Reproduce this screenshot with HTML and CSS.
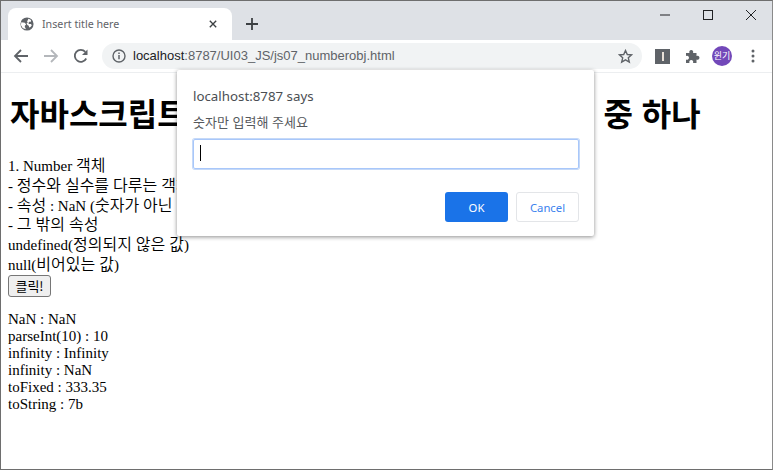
FILE: index.html
```html
<!DOCTYPE html>
<html lang="ko">
<head>
<meta charset="utf-8">
<title>Insert title here</title>
<link rel="stylesheet" href="styles.css">
</head>
<body>
<div class="window">
  <div class="tabstrip">
    <div class="tab">
      <svg class="favicon" width="16" height="16" viewBox="0 0 16 16"><circle cx="8" cy="8" r="7.500" fill="#5f6368"/><path d="M1.500 6l4 .5 1.500 2-1.500 1.500v1.500l1 1.500v1L3 12.500 1 9zM9.500 2l1.500.5 1.500 1v2h-2l-1 1.500 1 1h2l1 1.500-1.500 2-1.500.5-.5-2-1.500-1-1-1.500 1.500-1.500-1-1 1-1.500z" fill="#fff"/></svg>
      <span class="tab-title">Insert title here</span>
      <svg class="tab-close" width="10" height="10" viewBox="0 0 10 10"><path d="M1 1l8 8M9 1l-8 8" stroke="#3c4043" stroke-width="1.700" fill="none"/></svg>
    </div>
    <svg class="newtab" width="12" height="12" viewBox="0 0 12 12"><path d="M6 0v12M0 6h12" stroke="#3c4043" stroke-width="1.800" fill="none"/></svg>
    <div class="winctl">
      <svg width="10" height="10" viewBox="0 0 10 10"><path d="M0 5h10" stroke="#202124" stroke-width="1" fill="none"/></svg>
      <svg width="10" height="10" viewBox="0 0 10 10"><rect x=".5" y=".5" width="9" height="9" stroke="#202124" fill="none"/></svg>
      <svg width="10" height="10" viewBox="0 0 10 10"><path d="M0 0l10 10M10 0L0 10" stroke="#202124" fill="none"/></svg>
    </div>
  </div>
  <div class="toolbar">
    <svg class="nav" width="16" height="16" viewBox="0 0 16 16"><path d="M15 8H2M8 2L2 8l6 6" stroke="#5f6368" stroke-width="1.800" fill="none"/></svg>
    <svg class="nav" width="16" height="16" viewBox="0 0 16 16"><path d="M1 8h13M8 2l6 6-6 6" stroke="#b4b7bb" stroke-width="1.800" fill="none"/></svg>
    <svg class="nav" width="16" height="16" viewBox="0 0 16 16"><path d="M13.200 10.500A6 6 0 1 1 12.300 3.800" stroke="#5f6368" stroke-width="1.800" fill="none"/><path d="M14.500 1.500v5.500H9z" fill="#5f6368"/></svg>
    <div class="omnibox">
      <svg width="14" height="14" viewBox="0 0 14 14"><circle cx="7" cy="7" r="6" stroke="#5f6368" stroke-width="1.400" fill="none"/><path d="M7 6v4.200M7 3.500v1.500" stroke="#5f6368" stroke-width="1.500"/></svg>
      <span class="url"><span class="host">localhost</span>:8787/UI03_JS/js07_numberobj.html</span>
      <svg class="star" width="15" height="15" viewBox="0 0 15 15"><path d="M7.500 1.500l1.800 4 4.300.4-3.300 2.900 1 4.300-3.800-2.300-3.800 2.300 1-4.300L1.400 5.900l4.300-.4z" stroke="#5f6368" stroke-width="1.400" fill="none"/></svg>
    </div>
    <div class="ext-box"><span class="ext-bar"></span></div>
    <svg class="puzzle" width="14" height="14" viewBox="0 0 14 14"><path d="M0 4h3.500a2 2 0 1 1 3.500 0H10.500v3a2 2 0 1 1 0 3.500V14H7a2 2 0 1 0-3.500 0H0v-3.500a2 2 0 1 0 0-3.500z" fill="#5f6368"/></svg>
    <div class="avatar">윈기</div>
    <svg class="menu" width="4" height="14" viewBox="0 0 4 14"><circle cx="2" cy="2" r="1.500" fill="#5f6368"/><circle cx="2" cy="7" r="1.500" fill="#5f6368"/><circle cx="2" cy="12" r="1.500" fill="#5f6368"/></svg>
  </div>
  <main class="page">
    <h1 class="title">자바스크립트 기본 내장 객체 Number, 객체 중 하나</h1>
    <div class="kr-lines">
      <div class="l">1. Number <span class="ko">객체</span></div>
      <div class="l">- <span class="ko">정수와 실수를 다루는 객체</span></div>
      <div class="l">- <span class="ko">속성</span> : NaN (<span class="ko">숫자가 아닌 값</span>)</div>
      <div class="l">- <span class="ko">그 밖의 속성</span></div>
      <div class="l">undefined(<span class="ko">정의되지 않은 값</span>)</div>
      <div class="l">null(<span class="ko">비어있는 값</span>)</div>
    </div>
    <button class="btn">클릭!</button>
    <div class="results">
      <div>NaN : NaN</div>
      <div>parseInt(10) : 10</div>
      <div>infinity : Infinity</div>
      <div>infinity : NaN</div>
      <div>toFixed : 333.35</div>
      <div>toString : 7b</div>
    </div>
  </main>
  <div class="dialog">
    <div class="dlg-title">localhost:8787 says</div>
    <div class="dlg-msg">숫자만 입력해 주세요</div>
    <div class="dlg-input"><span class="caret"></span></div>
    <div class="dlg-btns">
      <button class="ok">OK</button>
      <button class="cancel">Cancel</button>
    </div>
  </div>
</div>
</body>
</html>
```
FILE: styles.css
```css
* { box-sizing: border-box; }
html, body { margin: 0; padding: 0; }
body { width: 773px; height: 470px; overflow: hidden; background: #fff; }
.window {
  position: relative;
  width: 773px;
  height: 470px;
  border: 1px solid #6e6e6e;
  border-right-color: #8a8a8a;
  overflow: hidden;
  display: flex;
  flex-direction: column;
  font-family: "Liberation Serif", "Noto Sans CJK KR", serif;
}
.tabstrip {
  height: 39px;
  flex: none;
  background: #dee1e6;
  display: flex;
  align-items: flex-end;
  padding-left: 7px;
}
.tab {
  width: 224px;
  height: 32px;
  background: #fff;
  border-radius: 8px 8px 0 0;
  display: flex;
  align-items: center;
  padding: 0 15px 0 12px;
}
.favicon { flex: none; width: 14px; height: 14px; }
.tab-title {
  flex: 1;
  margin-left: 8px;
  font: 10.700px "Noto Sans", "Open Sans", sans-serif;
  color: #5f6368;
}
.tab-close { flex: none; width: 8px; height: 8px; }
.newtab { flex: none; margin: 0 0 10px 14px; width: 12px; height: 12px; }
.winctl {
  margin-left: auto;
  align-self: flex-start;
  display: flex;
  gap: 33px;
  padding: 9px 16px 0 0;
}
.toolbar {
  height: 33px;
  flex: none;
  background: #fff;
  border-bottom: 1px solid #eceef0;
  display: flex;
  align-items: center;
  padding-left: 12px;
}
.nav { flex: none; margin-right: 14px; }
.omnibox {
  flex: none;
  width: 540px;
  height: 26px;
  margin-left: -1px;
  background: #f1f3f4;
  border-radius: 13px;
  display: flex;
  align-items: center;
  padding: 0 9px 0 10px;
}
.url {
  flex: 1;
  margin-left: 7px;
  font: 13px/26px "Liberation Sans", Arial, sans-serif;
  color: #5f6368;
  white-space: nowrap;
}
.host { color: #202124; }
.star { flex: none; }
.ext-box {
  flex: none;
  width: 15px;
  height: 15px;
  margin-left: 13px;
  background: #5f6368;
  display: flex;
  justify-content: center;
  align-items: center;
}
.ext-bar { width: 2px; height: 9px; background: #e8e0d8; }
.puzzle { flex: none; margin-left: 16px; }
.avatar {
  flex: none;
  width: 20px;
  height: 20px;
  margin-left: 12px;
  border-radius: 50%;
  background: #7248b9;
  color: #fff;
  font: 9px/20px "Noto Sans CJK KR", sans-serif;
  text-align: center;
}
.menu { flex: none; margin-left: 19px; }
.page {
  flex: 1;
  padding: 0 7px;
  color: #000;
  font-size: 15px;
}
.title {
  margin: 24px 0 22px 2px;
  font: bold 32px/37px "Liberation Sans", "Noto Sans CJK KR", sans-serif;
  white-space: nowrap;
}
.kr-lines .l { height: 19.800px; line-height: 20px; white-space: nowrap; }
.ko { font-size: 16px; font-weight: 350; }
.btn {
  display: block;
  width: 43px;
  height: 22px;
  padding: 0;
  font: 13px "Noto Sans CJK KR", sans-serif;
  color: #000;
  background: #efefef;
  border: 1px solid #767676;
  border-radius: 3px;
}
.results { margin-top: 14px; line-height: 17px; }
.dialog {
  position: absolute;
  left: 176px;
  top: 69px;
  width: 417px;
  height: 166px;
  background: #fff;
  border-radius: 2px;
  box-shadow: 0 1px 4px rgba(0,0,0,.45);
  padding: 17px 16px 0;
  font-family: "Noto Sans", "Open Sans", sans-serif;
}
.dlg-title { font-size: 13.300px; line-height: 18px; color: #4a4e52; }
.dlg-msg { margin-top: 8px; font: 13px/18px "Noto Sans CJK KR", sans-serif; color: #55585c; }
.dlg-input {
  margin-top: 8px;
  width: 386px;
  height: 30px;
  border: 1px solid #a8c7fa;
  box-shadow: 0 0 0 1px #c5d9f8;
  border-radius: 2px;
  padding: 5px 6px;
}
.caret { display: block; width: 1px; height: 16px; background: #000; }
.dlg-btns {
  margin-top: 23px;
  width: 386px;
  display: flex;
  justify-content: flex-end;
  gap: 8px;
}
.dlg-btns button {
  width: 63px;
  height: 30px;
  border-radius: 3px;
  font: 11.300px "Noto Sans", "Open Sans", sans-serif;
  padding: 0;
}
.ok { background: #1a73e8; color: #fff; border: 0; }
.cancel { background: #fff; color: #3b82ee; border: 1px solid #e3e5e8; }
```
